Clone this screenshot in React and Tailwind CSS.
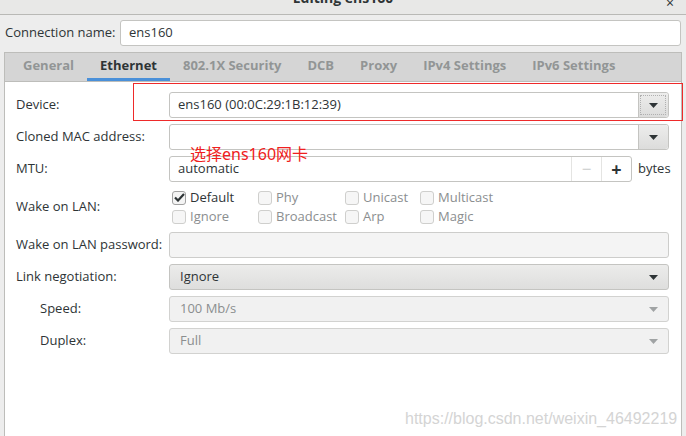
import { useState } from 'react';

const font = { fontFamily: '"Open Sans", "Noto Sans", "DejaVu Sans", sans-serif' };

// small down arrow used by the combo boxes
const Arrow = ({ muted }) => (
  <svg width="9" height="5" viewBox="0 0 9 5">
    <path d="M0 0h9L4.5 5z" fill={muted ? '#a0a3a4' : '#2e3436'} />
  </svg>
);

const Check = ({ label, checked, disabled }) => (
  <label className="flex items-center gap-[4px] h-[19px]">
    <span
      className={
        'w-[14px] h-[14px] rounded-[3px] border flex items-center justify-center ' +
        (checked ? 'border-[#a1a1a1] bg-[#f4f4f4]' : 'border-[#cfcfcd] bg-[#f6f6f6]')
      }
    >
      {checked && (
        <svg width="11" height="9" viewBox="0 0 11 9">
          <path d="M1 4.5l3 3L10 1" stroke="#2e3436" strokeWidth="2.2" fill="none" />
        </svg>
      )}
    </span>
    <span className={disabled ? 'text-[#8b8e8f]' : 'text-[#2e3436]'}>{label}</span>
  </label>
);

const Row = ({ label, indent, children, h = 'h-[26px]' }) => (
  <div className={'flex items-center ' + h}>
    <div className={'w-[153px] shrink-0 ' + (indent ? 'pl-[24px]' : '')}>{label}</div>
    <div className="flex-1 flex items-center h-full">{children}</div>
  </div>
);

export default function App() {
  const [tab, setTab] = useState('Ethernet');
  const tabs = ['General', 'Ethernet', '802.1X Security', 'DCB', 'Proxy', 'IPv4 Settings', 'IPv6 Settings'];

  return (
    <div className="w-[686px] h-[436px] bg-[#ededed] overflow-hidden relative text-[13px] text-[#2e3436]" style={font}>
      {/* title bar, cut off at the top */}
      <div className="h-[15px] border-b border-[#b9b9b6] bg-[#e8e8e7] relative overflow-hidden flex justify-center">
        <span className="font-bold text-[14px] leading-none -mt-[9px]">Editing ens160</span>
        <span className="absolute right-[12px] -top-[8px] text-[14px]">×</span>
      </div>

      {/* connection name */}
      <div className="flex items-center mt-[5px] h-[26px]">
        <div className="w-[120px] pl-[5px]">Connection name:</div>
        <div className="flex-1 mr-[5px] h-full bg-white border border-[#c4c4c1] rounded-[3px] flex items-center px-[8px]">
          ens160
        </div>
      </div>

      {/* notebook */}
      <div className="mt-[6px] ml-[4px] mr-[4px] border border-[#bdbdba] h-[400px] flex flex-col">
        <div className="h-[29px] bg-[#d5d5d5] border-b border-[#bdbdba] flex pl-[5px] font-bold">
          {tabs.map((t) => (
            <button
              key={t}
              onClick={() => setTab(t)}
              className={
                'px-[13px] h-full border-b-[3px] ' +
                (t === tab ? 'border-[#4a90d9] text-[#2e3436]' : 'border-transparent text-[#929595]')
              }
            >
              {t}
            </button>
          ))}
        </div>

        <div className="flex-1 bg-white pl-[11px] pr-[12px] pt-[10px] flex flex-col gap-[6px]">
          <Row label="Device:">
            <div className="flex-1 h-full border border-[#c4c4c1] rounded-[3px] flex items-center">
              <span className="flex-1 px-[8px]">ens160 (00:0C:29:1B:12:39)</span>
              <div className="w-[30px] h-full border-l border-[#c4c4c1] bg-gradient-to-b from-[#ededec] to-[#dcdcdb] rounded-r-[3px] flex items-center justify-center outline outline-1 outline-dotted outline-[#b0b0b0] -outline-offset-[3px]">
                <Arrow />
              </div>
            </div>
          </Row>

          <Row label="Cloned MAC address:">
            <div className="flex-1 h-full border border-[#c4c4c1] rounded-[3px] flex items-center">
              <span className="flex-1" />
              <div className="w-[30px] h-full border-l border-[#c4c4c1] bg-gradient-to-b from-[#ededec] to-[#dcdcdb] rounded-r-[3px] flex items-center justify-center">
                <Arrow />
              </div>
            </div>
          </Row>

          <Row label="MTU:">
            <div className="flex-1 h-full border border-[#c4c4c1] rounded-[3px] flex items-center">
              <span className="flex-1 px-[8px]">automatic</span>
              <div className="w-[30px] h-full border-l border-[#e4e4e2] flex items-center justify-center text-[#c9cbcb] text-[17px]">−</div>
              <div className="w-[30px] h-full border-l border-[#e4e4e2] flex items-center justify-center text-[#2e3436] text-[18px] font-bold">+</div>
            </div>
            <span className="ml-[6px] w-[31px]">bytes</span>
          </Row>

          <Row label="Wake on LAN:" h="h-[38px]">
            <div className="grid grid-cols-[86px_87px_75px_90px] pl-[3px]">
              <Check label="Default" checked />
              <Check label="Phy" disabled />
              <Check label="Unicast" disabled />
              <Check label="Multicast" disabled />
              <Check label="Ignore" disabled />
              <Check label="Broadcast" disabled />
              <Check label="Arp" disabled />
              <Check label="Magic" disabled />
            </div>
          </Row>

          <Row label="Wake on LAN password:">
            <div className="flex-1 h-full border border-[#cdcdcb] bg-[#f4f4f4] rounded-[3px]" />
          </Row>

          <Row label="Link negotiation:">
            <div className="flex-1 h-full border border-[#c4c4c1] rounded-[3px] bg-gradient-to-b from-[#ececeb] to-[#dededd] flex items-center px-[10px]">
              <span className="flex-1">Ignore</span>
              <Arrow />
            </div>
          </Row>

          <Row label="Speed:" indent>
            <div className="flex-1 h-full border border-[#d2d2d0] rounded-[3px] bg-[#f1f1f1] flex items-center px-[10px] text-[#8b8e8f]">
              <span className="flex-1">100 Mb/s</span>
              <Arrow muted />
            </div>
          </Row>

          <Row label="Duplex:" indent>
            <div className="flex-1 h-full border border-[#d2d2d0] rounded-[3px] bg-[#f1f1f1] flex items-center px-[10px] text-[#8b8e8f]">
              <span className="flex-1">Full</span>
              <Arrow muted />
            </div>
          </Row>
        </div>
      </div>

      {/* annotation overlays */}
      <div className="absolute left-[133px] top-[83px] w-[550px] h-[38px] border border-[#ee2a2a]" />
      <div
        className="absolute left-[190px] top-[144px] text-[16px] leading-[20px] text-[#f02020]"
        style={{ fontFamily: '"Noto Sans", "Noto Sans CJK SC", sans-serif' }}
      >
        选择ens160网卡
      </div>
      <div
        className="absolute left-[405px] top-[407px] text-[16px] text-[#d4d4d4]"
        style={{ fontFamily: '"Liberation Sans", Arial, sans-serif' }}
      >
        https://blog.csdn.net/weixin_46492219
      </div>
    </div>
  );
}
